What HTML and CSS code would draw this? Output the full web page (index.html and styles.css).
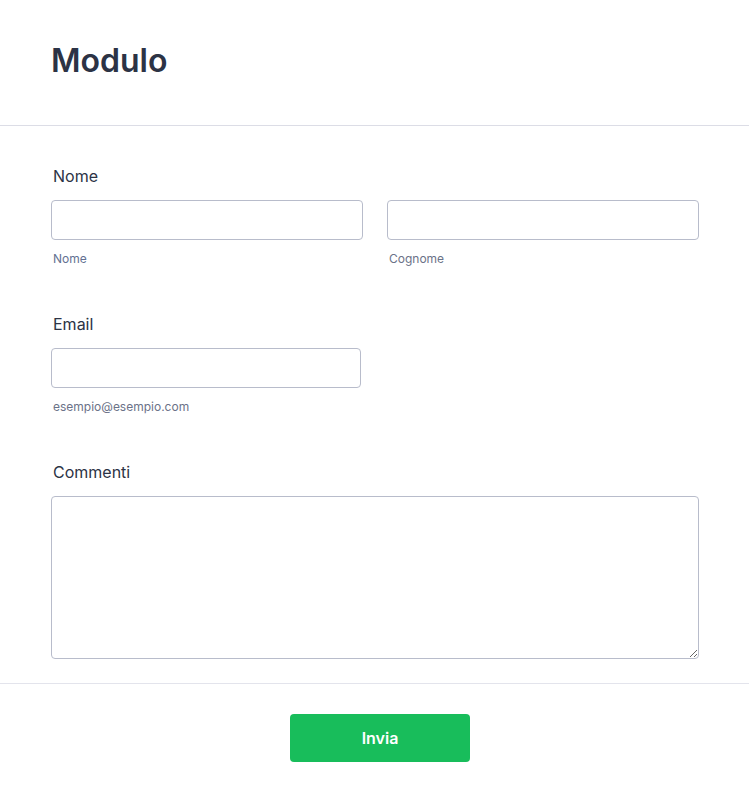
FILE: index.html
```html
<!DOCTYPE html>
<html lang="it">
<head>
<meta charset="utf-8">
<title>Modulo</title>
<link rel="stylesheet" href="styles.css">
</head>
<body>
<div class="page">
  <header class="header">
    <h1 class="title">Modulo</h1>
  </header>
  <form class="form">
    <div class="field">
      <label class="label">Nome</label>
      <div class="name-row">
        <div class="sub">
          <input class="input" type="text">
          <span class="sublabel">Nome</span>
        </div>
        <div class="sub">
          <input class="input" type="text">
          <span class="sublabel">Cognome</span>
        </div>
      </div>
    </div>
    <div class="field">
      <label class="label">Email</label>
      <div class="sub email">
        <input class="input" type="email">
        <span class="sublabel">esempio@esempio.com</span>
      </div>
    </div>
    <div class="field last">
      <label class="label">Commenti</label>
      <textarea class="textarea"></textarea>
    </div>
  </form>
  <div class="footer">
    <button class="submit" type="button">Invia</button>
  </div>
</div>
</body>
</html>
```
FILE: styles.css
```css
* { box-sizing: border-box; }
html, body { margin: 0; padding: 0; background: #fff; }
body {
  font-family: Inter, "Noto Sans", sans-serif;
  color: #2c3345;
}
.page { width: 100%; }
.header {
  padding: 41px 51px 44px;
  border-bottom: 1px solid #dcdde6;
}
.title {
  margin: 0;
  font-size: 32px;
  line-height: 40px;
  font-weight: 600;
  color: #2c3345;
}
.form {
  padding: 38px 50px 0 51px;
}
.field {
  display: flex;
  flex-direction: column;
  margin-bottom: 44px;
}
.field.last { margin-bottom: 24px; }
.label {
  font-size: 16px;
  line-height: 24px;
  font-weight: 400;
  color: #2c3345;
  margin-bottom: 12px;
  padding-left: 2px;
}
.name-row {
  display: grid;
  grid-template-columns: 1fr 1fr;
  column-gap: 24px;
}
.sub { display: flex; flex-direction: column; }
.sub.email { width: 310px; }
.input {
  height: 40px;
  width: 100%;
  border: 1px solid #b8bccb;
  border-radius: 4px;
  background: #fff;
  font: inherit;
  padding: 0 10px;
}
.sublabel {
  margin-top: 10px;
  font-size: 12px;
  line-height: 18px;
  color: #637192;
  padding-left: 2px;
}
.name-row .sub:nth-child(2) .sublabel { color: #6b7288; }
.email .sublabel { color: #6b7288; }
.textarea {
  width: 100%;
  height: 163px;
  border: 1px solid #b8bccb;
  border-radius: 4px;
  font: inherit;
  padding: 8px 10px;
  resize: vertical;
  display: block;
}
.footer {
  border-top: 1px solid #e3e4ec;
  display: flex;
  justify-content: center;
  padding: 30px 0 45px;
}
.submit {
  width: 180px;
  height: 48px;
  border: none;
  border-radius: 4px;
  background: #18bd5b;
  color: #fff;
  font-family: Inter, "Noto Sans", sans-serif;
  font-size: 16px;
  font-weight: 600;
  margin-left: 11px;
}
```
